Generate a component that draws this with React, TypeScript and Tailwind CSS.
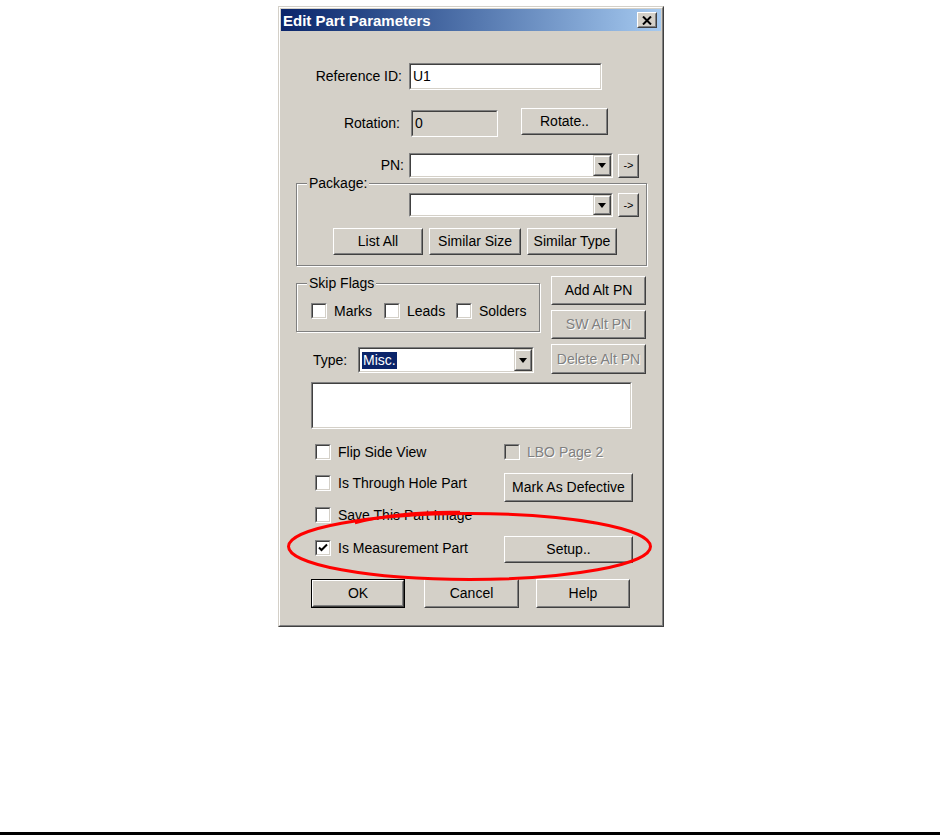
import React from 'react';

type BoxProps = {
  className?: string;
  children?: React.ReactNode;
};

// raised 3d edge, used for buttons
function Btn({
  className = '',
  children,
  disabled = false,
  isDefault = false,
  small = false,
}: BoxProps & { disabled?: boolean; isDefault?: boolean; small?: boolean }) {
  const body = (
    <div
      className={`border border-t-white border-l-white border-r-[#404040] border-b-[#404040] bg-[#d4d0c8] ${
        isDefault ? 'w-full h-full' : className
      }`}
    >
      <div className="w-full h-full border border-t-[#d4d0c8] border-l-[#d4d0c8] border-r-[#808080] border-b-[#808080] flex items-center justify-center">
        <span
          className={`${small ? 'text-[11px]' : ''} ${
            disabled ? 'text-[#808080] [text-shadow:1px_1px_0_#ffffff]' : 'text-black'
          }`}
        >
          {children}
        </span>
      </div>
    </div>
  );
  if (isDefault) return <div className={`border border-black ${className}`}>{body}</div>;
  return body;
}

// sunken edit field
function Field({ className = '', children, grey = false }: BoxProps & { grey?: boolean }) {
  return (
    <div className={`border border-t-[#808080] border-l-[#808080] border-r-white border-b-white ${className}`}>
      <div
        className={`w-full h-full border border-t-[#404040] border-l-[#404040] border-r-[#d4d0c8] border-b-[#d4d0c8] flex items-center ${
          grey ? 'bg-[#d4d0c8]' : 'bg-white'
        }`}
      >
        {children}
      </div>
    </div>
  );
}

function DropArrow() {
  return (
    <div className="w-[18px] h-full border border-t-[#d4d0c8] border-l-[#d4d0c8] border-r-[#404040] border-b-[#404040]">
      <div className="w-full h-full border border-t-white border-l-white border-r-[#808080] border-b-[#808080] bg-[#d4d0c8] flex items-center justify-center">
        <svg width="8" height="5" viewBox="0 0 8 5">
          <path d="M0 0 H8 L4 5 Z" fill="#000" />
        </svg>
      </div>
    </div>
  );
}

function Combo({ className = '', children }: BoxProps) {
  return (
    <Field className={className}>
      <div className="flex-1 h-full flex items-center pl-[2px]">{children}</div>
      <DropArrow />
    </Field>
  );
}

function Check({ checked = false, disabled = false }: { checked?: boolean; disabled?: boolean }) {
  return (
    <Field className="w-[16px] h-[16px] shrink-0" grey={disabled}>
      {checked && (
        <svg width="12" height="12" viewBox="0 0 12 12" className="mx-auto">
          <path d="M2 5.5 L4.5 8 L10 2.5" stroke="#000" strokeWidth="2" fill="none" />
        </svg>
      )}
    </Field>
  );
}

function CheckLabel({
  children,
  checked,
  disabled,
}: {
  children: React.ReactNode;
  checked?: boolean;
  disabled?: boolean;
}) {
  return (
    <div className="flex items-center">
      <Check checked={checked} disabled={disabled} />
      <span
        className={`ml-[7px] leading-[16px] ${
          disabled ? 'text-[#808080] [text-shadow:1px_1px_0_#ffffff]' : 'text-black'
        }`}
      >
        {children}
      </span>
    </div>
  );
}

function Group({ label, className = '', children }: BoxProps & { label: string }) {
  return (
    <div className={`relative border border-[#808080] shadow-[inset_1px_1px_0_#ffffff,1px_1px_0_#ffffff] ${className}`}>
      <span className="absolute -top-[9px] left-[10px] bg-[#d4d0c8] px-[2px] leading-[16px]">{label}</span>
      {children}
    </div>
  );
}

export default function App() {
  return (
    <div className="relative w-[942px] h-[835px] bg-white flex flex-col font-['Liberation_Sans',Arial,sans-serif] text-[14px] text-black">
      <div className="pt-[6px] pl-[278px]">
        {/* dialog frame */}
        <div className="w-[386px] h-[621px] border border-t-[#d4d0c8] border-l-[#d4d0c8] border-r-[#404040] border-b-[#404040]">
          <div className="w-full h-full border border-t-white border-l-white border-r-[#808080] border-b-[#808080] bg-[#d4d0c8] p-[1px] flex flex-col">
            {/* title bar */}
            <div className="h-[22px] shrink-0 bg-gradient-to-r from-[#0a246a] to-[#a6caf0] flex items-center justify-between pl-[2px] pr-[4px]">
              <span className="text-white font-bold text-[15px] leading-none">Edit Part Parameters</span>
              <Btn className="w-[20px] h-[16px]">
                <svg width="10" height="9" viewBox="0 0 10 9" className="block">
                  <path d="M1 0.5 L9 8.5 M9 0.5 L1 8.5" stroke="#000" strokeWidth="2" />
                </svg>
              </Btn>
            </div>

            {/* Reference ID */}
            <div className="mt-[32px] flex items-center h-[27px]">
              <span className="w-[121px] text-right">Reference ID:</span>
              <Field className="ml-[7px] w-[193px] h-[27px]">
                <span className="pl-[2px]">U1</span>
              </Field>
            </div>

            {/* Rotation */}
            <div className="mt-[18px] flex items-start h-[29px]">
              <span className="w-[119px] text-right mt-[2px] leading-[27px]">Rotation:</span>
              <Field grey className="ml-[11px] mt-[2px] w-[87px] h-[27px]">
                <span className="pl-[2px]">0</span>
              </Field>
              <Btn className="ml-[23px] w-[87px] h-[27px]">Rotate..</Btn>
            </div>

            {/* PN */}
            <div className="mt-[16px] flex items-center h-[25px]">
              <span className="w-[123px] text-right">PN:</span>
              <Combo className="ml-[5px] w-[204px] h-[25px]" />
              <Btn small className="ml-[5px] w-[21px] h-[24px]">-&gt;</Btn>
            </div>

            {/* Package */}
            <Group label="Package:" className="ml-[15px] mt-[5px] w-[351px] h-[83px] shrink-0">
              <div className="mt-[9px] ml-[112px] flex items-center">
                <Combo className="w-[204px] h-[24px]" />
                <Btn small className="ml-[5px] w-[21px] h-[24px]">-&gt;</Btn>
              </div>
              <div className="mt-[11px] ml-[36px] flex gap-[6px]">
                <Btn className="w-[90px] h-[27px]">List All</Btn>
                <Btn className="w-[92px] h-[27px]">Similar Size</Btn>
                <Btn className="w-[90px] h-[27px]">Similar Type</Btn>
              </div>
            </Group>

            {/* Skip flags / Type + alt PN buttons */}
            <div className="mt-[10px] flex">
              <div className="ml-[15px] w-[244px] flex flex-col">
                <Group label="Skip Flags" className="mt-[7px] w-[244px] h-[49px]">
                  <div className="mt-[19px] ml-[14px] flex items-center">
                    <div className="w-[73px]">
                      <CheckLabel>Marks</CheckLabel>
                    </div>
                    <div className="w-[72px]">
                      <CheckLabel>Leads</CheckLabel>
                    </div>
                    <CheckLabel>Solders</CheckLabel>
                  </div>
                </Group>
                <div className="mt-[15px] flex items-center h-[26px]">
                  <span className="ml-[17px] w-[45px]">Type:</span>
                  <Combo className="w-[176px] h-[26px]">
                    <span className="bg-[#0a246a] text-white px-[1px] leading-[17px]">Misc.</span>
                  </Combo>
                </div>
              </div>
              <div className="ml-[11px] flex flex-col gap-[5px]">
                <Btn className="w-[95px] h-[29px]">Add Alt PN</Btn>
                <Btn disabled className="w-[95px] h-[29px]">SW Alt PN</Btn>
                <Btn disabled className="w-[95px] h-[30px]">Delete Alt PN</Btn>
              </div>
            </div>

            {/* notes box */}
            <Field className="mt-[8px] ml-[30px] w-[321px] h-[47px] shrink-0" />

            {/* options */}
            <div className="mt-[15px] flex items-center h-[16px]">
              <div className="w-[223px] pl-[34px]">
                <CheckLabel>Flip Side View</CheckLabel>
              </div>
              <CheckLabel disabled>LBO Page 2</CheckLabel>
            </div>

            <div className="mt-[13px] flex items-start h-[29px]">
              <div className="w-[223px] pl-[34px] mt-[2px]">
                <CheckLabel>Is Through Hole Part</CheckLabel>
              </div>
              <Btn className="w-[129px] h-[29px]">Mark As Defective</Btn>
            </div>

            <div className="mt-[5px] flex items-center h-[16px]">
              <div className="w-[223px] pl-[34px]">
                <CheckLabel>Save This Part Image</CheckLabel>
              </div>
            </div>

            <div className="mt-[13px] flex items-start h-[27px]">
              <div className="w-[223px] pl-[34px] mt-[4px]">
                <CheckLabel checked>Is Measurement Part</CheckLabel>
              </div>
              <Btn className="w-[129px] h-[27px]">Setup..</Btn>
            </div>

            {/* OK / Cancel / Help */}
            <div className="mt-[16px] flex h-[29px]">
              <Btn isDefault className="ml-[30px] w-[94px] h-[29px]">OK</Btn>
              <Btn className="ml-[19px] w-[95px] h-[29px]">Cancel</Btn>
              <Btn className="ml-[17px] w-[94px] h-[29px]">Help</Btn>
            </div>
          </div>
        </div>
      </div>

      <div className="mt-auto mb-0 w-[940px] h-[3px] bg-black" />

      {/* red annotation drawn over the dialog */}
      <svg className="absolute left-0 top-0 pointer-events-none" width="942" height="835" viewBox="0 0 942 835">
        <ellipse cx="469.5" cy="546.5" rx="181" ry="33" fill="none" stroke="#ff0000" strokeWidth="3" />
        <path d="M355 523 Q400 511 460 512" fill="none" stroke="#ff0000" strokeWidth="2.5" />
      </svg>
    </div>
  );
}
